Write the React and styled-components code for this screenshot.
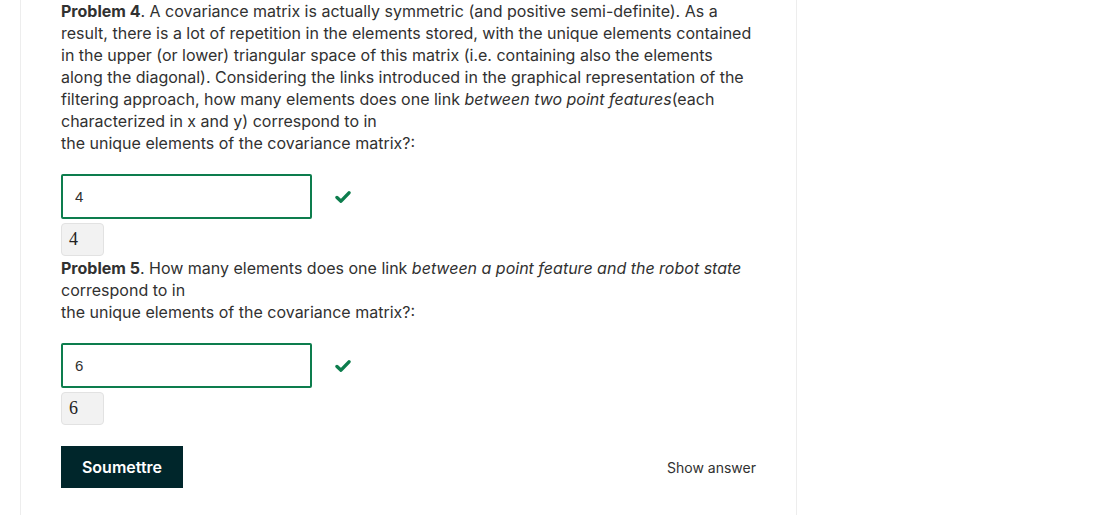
import styled, { createGlobalStyle } from 'styled-components';

const GlobalStyle = createGlobalStyle`
  html, body {
    margin: 0;
    padding: 0;
    background: #ffffff;
  }
  body {
    font-family: Inter, "Open Sans", "Liberation Sans", sans-serif;
    color: #313131;
  }
`;

const Panel = styled.div`
  box-sizing: border-box;
  margin-left: 20px;
  width: 777px;
  min-height: 100vh;
  padding: 0 40px 0 40px;
  border-left: 1px solid #ededed;
  border-right: 1px solid #ededed;
`;

const Prompt = styled.p`
  margin: 0;
  font-size: 16px;
  line-height: 22px;
  color: #313131;
  white-space: nowrap;

  strong {
    font-weight: 700;
  }
  em {
    font-style: italic;
  }
`;

const AnswerRow = styled.div`
  display: flex;
  align-items: center;
  margin-top: 20px;
`;

const TextInput = styled.input`
  box-sizing: border-box;
  width: 251px;
  height: 45px;
  padding: 0 12px;
  border: 2px solid #0d7d4d;
  border-radius: 2px;
  font-family: "Liberation Sans", Arial, sans-serif;
  font-size: 15px;
  color: #313131;
  background: #fff;
  outline: none;
`;

const Status = styled.span`
  display: inline-flex;
  margin-left: 23px;
  color: #0d7d4d;
`;

const Preview = styled.div`
  box-sizing: border-box;
  display: inline-flex;
  align-items: center;
  margin-top: 4px;
  width: 43px;
  height: 33px;
  padding-left: 7px;
  background: #f2f2f2;
  border: 1px solid #e2e2e2;
  border-radius: 4px;
  font-family: "Liberation Serif", "DejaVu Serif", serif;
  font-size: 18px;
  color: #222;
`;

const Problem = styled.div`
  margin-top: ${(p) => p.$gap || 0}px;
`;

const Actions = styled.div`
  display: flex;
  align-items: center;
  justify-content: space-between;
  margin-top: 21px;
`;

const SubmitButton = styled.button`
  width: 122px;
  height: 42px;
  border: none;
  border-radius: 0;
  background: #00262b;
  color: #fff;
  font-family: Inter, "Liberation Sans", sans-serif;
  font-weight: 600;
  font-size: 16px;
  cursor: pointer;
`;

const LinkButton = styled.button`
  border: none;
  background: none;
  padding: 0;
  font-family: Inter, "Liberation Sans", sans-serif;
  font-size: 14px;
  color: #313131;
  cursor: pointer;
`;

function CheckIcon() {
  return (
    <svg width="16" height="14" viewBox="0 0 16 14">
      <path
        d="M2 7.5 L6 11.2 L14 2.8"
        fill="none"
        stroke="currentColor"
        strokeWidth="3.4"
        strokeLinecap="round"
        strokeLinejoin="round"
      />
    </svg>
  );
}

function Answer({ value }) {
  return (
    <>
      <AnswerRow>
        <TextInput defaultValue={value} />
        <Status>
          <CheckIcon />
        </Status>
      </AnswerRow>
      <Preview>{value}</Preview>
    </>
  );
}

export default function App() {
  return (
    <>
      <GlobalStyle />
      <Panel>
        <Problem>
          <Prompt>
            <strong>Problem 4</strong>. A covariance matrix is actually symmetric (and positive semi-definite). As a
            <br />
            result, there is a lot of repetition in the elements stored, with the unique elements contained
            <br />
            in the upper (or lower) triangular space of this matrix (i.e. containing also the elements
            <br />
            along the diagonal). Considering the links introduced in the graphical representation of the
            <br />
            filtering approach, how many elements does one link <em>between two point features</em>(each
            <br />
            characterized in x and y) correspond to in
            <br />
            the unique elements of the covariance matrix?:
          </Prompt>
          <Answer value="4" />
        </Problem>
        <Problem $gap={1}>
          <Prompt>
            <strong>Problem 5</strong>. How many elements does one link <em>between a point feature and the robot state</em>
            <br />
            correspond to in
            <br />
            the unique elements of the covariance matrix?:
          </Prompt>
          <Answer value="6" />
        </Problem>
        <Actions>
          <SubmitButton>Soumettre</SubmitButton>
          <LinkButton>Show answer</LinkButton>
        </Actions>
      </Panel>
    </>
  );
}
